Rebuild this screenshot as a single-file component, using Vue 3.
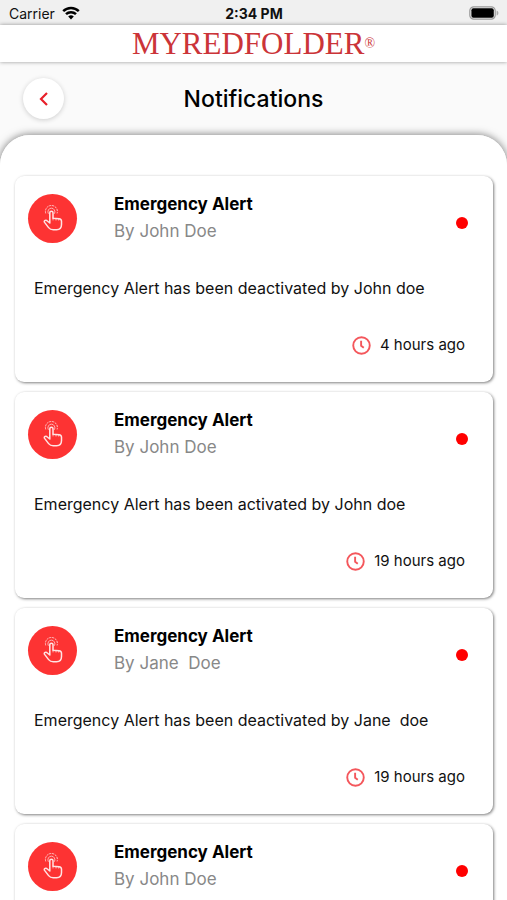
<script setup>
import { ref } from 'vue'

const notifications = ref([
  { id: 1, title: 'Emergency Alert', by: 'By John Doe', message: 'Emergency Alert has been deactivated by John doe', time: '4 hours ago' },
  { id: 2, title: 'Emergency Alert', by: 'By John Doe', message: 'Emergency Alert has been activated by John doe', time: '19 hours ago' },
  { id: 3, title: 'Emergency Alert', by: 'By Jane  Doe', message: 'Emergency Alert has been deactivated by Jane  doe', time: '19 hours ago' },
  { id: 4, title: 'Emergency Alert', by: 'By John Doe', message: '', time: '' },
])
</script>

<template>
  <div class="screen">
    <div class="status">
      <div class="carrier">
        <span>Carrier</span>
        <svg class="wifi" viewBox="0 0 18 14" aria-hidden="true">
          <path d="M1.2 5.2a11.2 11.2 0 0 1 15.6 0" />
          <path d="M4 8.2a7.2 7.2 0 0 1 10 0" />
          <path class="solid" d="M9 13.4 6.2 10.6a4 4 0 0 1 5.6 0Z" />
        </svg>
      </div>
      <span class="clock">2:34 PM</span>
      <svg class="battery" viewBox="0 0 30 14" aria-hidden="true">
        <rect class="shell" x=".8" y=".8" width="25.4" height="12.4" rx="4" />
        <rect x="2.4" y="2.2" width="22.4" height="9.6" rx="2" />
        <path class="cap" d="M27.6 4.4c2.4 1 2.4 4.2 0 5.2Z" />
      </svg>
    </div>

    <header class="brand">
      <span class="logo">MYREDFOLDER</span><span class="mark">®</span>
    </header>

    <div class="heading">
      <button class="back" type="button" aria-label="Back">
        <svg viewBox="0 0 10 16" aria-hidden="true"><path d="M8 2 2 8l6 6" /></svg>
      </button>
      <h1>Notifications</h1>
    </div>

    <main class="panel">
      <article v-for="item in notifications" :key="item.id" class="card">
        <div class="top">
          <div class="badge">
            <svg viewBox="0 0 20 26" aria-hidden="true">
              <path d="M6.8 18V7.8a1.6 1.6 0 0 1 3.2 0v5.4l6 .5c1.7.2 2.5 1 2.5 2.5v3.4c0 3.2-1.8 5.2-4.9 5.2h-3.4c-2 0-3.4-.7-4.6-2.2l-4-5.2c-.9-1.5.6-2.8 2.1-1.9L6.8 18" />
              <path class="fine" d="M10 13v2M13 13.4v1.7M15.7 13.7v1.5" />
              <path class="fine" d="M5.2 8.4a3.6 3.6 0 1 1 6.4 0" />
              <path class="rays" d="M2.6 8a6 6 0 1 1 11.6 0" />
            </svg>
          </div>
          <div class="who">
            <h2>{{ item.title }}</h2>
            <p>{{ item.by }}</p>
          </div>
          <span class="dot"></span>
        </div>
        <p v-if="item.message" class="message">{{ item.message }}</p>
        <div v-if="item.time" class="time">
          <svg viewBox="0 0 20 20" aria-hidden="true">
            <circle cx="10" cy="10" r="8.7" />
            <path d="M9.6 5v5.2l2.8 2.2" />
          </svg>
          <span>{{ item.time }}</span>
        </div>
      </article>
    </main>
  </div>
</template>

<style>
body {
  background: #fafafa;
}
</style>

<style scoped>
.screen {
  display: flex;
  flex-direction: column;
  height: 100vh;
  overflow: hidden;
  color: #111;
  background: #fafafa;
  font-family: Inter, "Liberation Sans", sans-serif;
}

h1,
h2,
p {
  margin: 0;
}

.status {
  display: grid;
  grid-template-columns: 1fr auto 1fr;
  align-items: center;
  flex: none;
  height: 25px;
  padding: 1px 8px 0 9px;
  box-sizing: border-box;
  background: #f0f0f0;
  font-size: 14px;
}

.carrier {
  display: flex;
  align-items: center;
  gap: 7px;
}

.wifi {
  width: 18px;
  height: 14px;
  fill: none;
  stroke: #000;
  stroke-width: 2.5;
}

.wifi .solid {
  fill: #000;
  stroke: none;
}

.clock {
  font-weight: 700;
}

.battery {
  justify-self: end;
  width: 30px;
  height: 14px;
}

.battery .shell {
  fill: none;
  stroke: #999;
  stroke-width: 1.2;
}

.battery .cap {
  fill: #aaa;
}

.brand {
  display: flex;
  justify-content: center;
  align-items: center;
  flex: none;
  height: 37px;
  background: #fff;
  color: #cb3438;
  box-shadow: 0 0 4px rgba(0, 0, 0, 0.4);
  font-family: "Liberation Serif", serif;
}

.logo {
  font-size: 31px;
  line-height: 36px;
}

.mark {
  font-size: 14px;
}

.heading {
  display: grid;
  grid-template-columns: 1fr auto 1fr;
  align-items: center;
  flex: none;
  height: 73px;
  padding: 0 23px;
}

.back {
  display: flex;
  align-items: center;
  justify-content: center;
  width: 41px;
  height: 41px;
  padding: 0;
  border: 0;
  border-radius: 50%;
  background: #fff;
  box-shadow: 0 1px 5px rgba(0, 0, 0, 0.18);
}

.back svg {
  width: 10px;
  height: 16px;
  fill: none;
  stroke: #e8202a;
  stroke-width: 2.2;
}

h1 {
  color: #000;
  font-size: 23px;
  font-weight: 500;
  line-height: 30px;
}

.panel {
  display: flex;
  flex-direction: column;
  gap: 10px;
  flex: 1;
  min-height: 0;
  padding: 41px 14px 20px 15px;
  overflow-y: auto;
  scrollbar-width: none;
  border-radius: 30px 30px 0 0;
  background: #fff;
  box-shadow: 0 0 8px rgba(0, 0, 0, 0.55);
}

.card {
  display: flex;
  flex-direction: column;
  flex: none;
  min-height: 206px;
  padding: 13px 12px 0 13px;
  box-sizing: border-box;
  border-radius: 9px;
  background: #fff;
  box-shadow: 1px 1px 3px rgba(0, 0, 0, 0.5);
}

.top {
  display: flex;
  align-items: center;
  height: 58px;
}

.badge {
  display: flex;
  align-items: center;
  justify-content: center;
  width: 49px;
  height: 49px;
  border-radius: 50%;
  background: #fd3333;
}

.badge svg {
  width: 20px;
  height: 26px;
  fill: none;
  stroke: #ffe4e4;
  stroke-width: 1.5;
  stroke-linejoin: round;
  stroke-linecap: round;
}

.badge .fine {
  stroke-width: 0.7;
}

.badge .rays {
  stroke-width: 0.8;
  stroke-dasharray: 1.4 1.6;
}

.who {
  flex: 1;
  padding-left: 37px;
}

.who h2 {
  color: #000;
  font-size: 17px;
  font-weight: 700;
  line-height: 27px;
}

.who p {
  color: #888;
  font-size: 17px;
  line-height: 27px;
  white-space: pre;
}

.dot {
  width: 12px;
  height: 12px;
  margin: 10px 13px 0 0;
  border-radius: 50%;
  background: #f00;
}

.message {
  padding: 30px 6px 0;
  font-size: 16px;
  line-height: 22px;
  white-space: pre-wrap;
}

.time {
  display: flex;
  align-items: center;
  justify-content: flex-end;
  gap: 9px;
  padding: 35px 16px 0 0;
  font-size: 15px;
  line-height: 22px;
}

.time svg {
  width: 19px;
  height: 19px;
  fill: none;
  stroke: #f4575c;
  stroke-width: 2;
}
</style>
